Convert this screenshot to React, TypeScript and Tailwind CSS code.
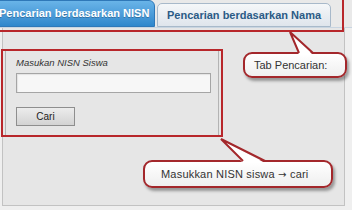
import React from 'react';

const sans = { fontFamily: '"Liberation Sans", Arial, sans-serif' };

function Callout({ box, tail, children, className }: {
  box: string;
  tail: { apex: [number, number]; a: [number, number]; b: [number, number] };
  children: React.ReactNode;
  className: string;
}) {
  const { apex, a, b } = tail;
  return (
    <>
      <div className={`absolute ${box} rounded-[9px] border-2 border-[#a3272b] bg-gradient-to-b from-white to-[#efefef] shadow-[2px_3px_3px_rgba(0,0,0,0.35)] flex items-center ${className}`}>
        {children}
      </div>
      {/* tail of the callout */}
      <svg className="absolute left-0 top-0 pointer-events-none" width="352" height="210">
        <polygon points={`${apex[0]},${apex[1]} ${a[0]},${a[1] + 2} ${b[0]},${b[1] + 2}`} fill="#ffffff" />
        <polyline points={`${a[0]},${a[1]} ${apex[0]},${apex[1]} ${b[0]},${b[1]}`} fill="none" stroke="#a3272b" strokeWidth="2" strokeLinejoin="miter" />
      </svg>
    </>
  );
}

export default function App() {
  return (
    <div className="relative w-[352px] h-[210px] overflow-hidden bg-[#efefef]" style={sans}>
      {/* Tab bar */}
      <div className="flex items-end h-[28px] border-b border-[#c9d5e1] bg-[#e9e9e9]">
        <div className="-ml-[4px] w-[159px] h-[27px] rounded-tr-[6px] border border-[#2f78b8] bg-gradient-to-b from-[#69b4e8] to-[#2f87cc] flex items-center pl-[2px] text-[11px] font-bold text-white [text-shadow:0_1px_0_rgba(0,0,0,0.25)]">
          Pencarian berdasarkan NISN
        </div>
        <div className="ml-[2px] w-[174px] h-[24px] rounded-t-[5px] border border-[#a8b9ca] bg-gradient-to-b from-[#f5f7f9] to-[#dfe5ec] flex items-center pl-[9px] text-[11px] font-bold text-[#2b5b86]">
          Pencarian berdasarkan Nama
        </div>
      </div>

      {/* Content panel */}
      <div className="ml-[2px] w-[343px] h-[178px] border-l border-r border-b border-[#c2c2c2] bg-[#e6e6e6] pt-[21px]">
        <div className="-ml-[2px] w-[222px] h-[88px] border-2 border-[#b8272b] px-[2px]">
          <div className="h-full border-l border-r border-[#b3b3b3] pl-[10px] pt-[5px]">
            <div className="text-[9.5px] italic text-[#333]">Masukan NISN Siswa</div>
            <div className="mt-[3px] w-[195px] h-[20px] border border-[#a5a5a5] bg-[#f7f7f7] shadow-[inset_1px_1px_1px_rgba(0,0,0,0.08)]" />
            <button type="button" className="mt-[14px] w-[59px] h-[19px] border border-[#8e8e8e] bg-gradient-to-b from-[#ececec] to-[#d3d3d3] text-[10px] text-[#222]">
              Cari
            </button>
          </div>
        </div>
      </div>

      {/* Annotation box round the tabs */}
      <div className="absolute -left-[2px] -top-[2px] w-[346px] h-[34px] border-2 border-[#b8272b] pointer-events-none" />

      <Callout
        box="left-[243px] top-[52px] w-[104px] h-[26px]"
        className="pl-[9px] text-[11px] text-[#333]"
        tail={{ apex: [290, 32], a: [299, 53], b: [313, 53] }}
      >
        Tab Pencarian:
      </Callout>
      <Callout
        box="left-[143px] top-[160px] w-[190px] h-[28px]"
        className="pl-[16px] text-[11px] text-[#333] tracking-[0.2px] whitespace-pre"
      tail={{ apex: [221, 139], a: [243, 161], b: [265, 161] }}
      >
        {'Masukkan NISN siswa '}
        <span style={{ fontFamily: '"DejaVu Sans", sans-serif', fontSize: '10px' }}>→</span>
        {' cari'}
      </Callout>
    </div>
  );
}
